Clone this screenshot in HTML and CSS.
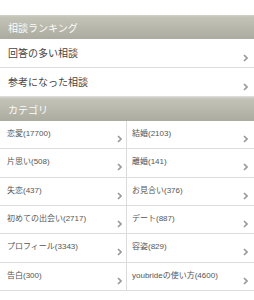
FILE: index.html
```html
<!DOCTYPE html>
<html lang="ja">
<head>
<meta charset="utf-8">
<link rel="stylesheet" href="styles.css">
</head>
<body>
<div class="page">
  <section class="sec">
    <h2 class="sec-head">相談ランキング</h2>
    <ul class="list">
      <li class="item"><span class="label">回答の多い相談</span><svg class="chev" width="5" height="8" viewBox="0 0 5 8"><path d="M1 1 L4 4 L1 7" fill="none" stroke="#9a9a9a" stroke-width="1.7"/></svg></li>
      <li class="item"><span class="label">参考になった相談</span><svg class="chev" width="5" height="8" viewBox="0 0 5 8"><path d="M1 1 L4 4 L1 7" fill="none" stroke="#9a9a9a" stroke-width="1.7"/></svg></li>
    </ul>
  </section>
  <section class="sec">
    <h2 class="sec-head">カテゴリ</h2>
    <ul class="grid">
      <li class="cell"><span class="clabel">恋愛(17700)</span><svg class="chev" width="5" height="8" viewBox="0 0 5 8"><path d="M1 1 L4 4 L1 7" fill="none" stroke="#9a9a9a" stroke-width="1.7"/></svg></li>
      <li class="cell"><span class="clabel">結婚(2103)</span><svg class="chev" width="5" height="8" viewBox="0 0 5 8"><path d="M1 1 L4 4 L1 7" fill="none" stroke="#9a9a9a" stroke-width="1.7"/></svg></li>
      <li class="cell"><span class="clabel">片思い(508)</span><svg class="chev" width="5" height="8" viewBox="0 0 5 8"><path d="M1 1 L4 4 L1 7" fill="none" stroke="#9a9a9a" stroke-width="1.7"/></svg></li>
      <li class="cell"><span class="clabel">離婚(141)</span><svg class="chev" width="5" height="8" viewBox="0 0 5 8"><path d="M1 1 L4 4 L1 7" fill="none" stroke="#9a9a9a" stroke-width="1.7"/></svg></li>
      <li class="cell"><span class="clabel">失恋(437)</span><svg class="chev" width="5" height="8" viewBox="0 0 5 8"><path d="M1 1 L4 4 L1 7" fill="none" stroke="#9a9a9a" stroke-width="1.7"/></svg></li>
      <li class="cell"><span class="clabel">お見合い(376)</span><svg class="chev" width="5" height="8" viewBox="0 0 5 8"><path d="M1 1 L4 4 L1 7" fill="none" stroke="#9a9a9a" stroke-width="1.7"/></svg></li>
      <li class="cell"><span class="clabel">初めての出会い(2717)</span><svg class="chev" width="5" height="8" viewBox="0 0 5 8"><path d="M1 1 L4 4 L1 7" fill="none" stroke="#9a9a9a" stroke-width="1.7"/></svg></li>
      <li class="cell"><span class="clabel">デート(887)</span><svg class="chev" width="5" height="8" viewBox="0 0 5 8"><path d="M1 1 L4 4 L1 7" fill="none" stroke="#9a9a9a" stroke-width="1.7"/></svg></li>
      <li class="cell"><span class="clabel">プロフィール(3343)</span><svg class="chev" width="5" height="8" viewBox="0 0 5 8"><path d="M1 1 L4 4 L1 7" fill="none" stroke="#9a9a9a" stroke-width="1.7"/></svg></li>
      <li class="cell"><span class="clabel">容姿(829)</span><svg class="chev" width="5" height="8" viewBox="0 0 5 8"><path d="M1 1 L4 4 L1 7" fill="none" stroke="#9a9a9a" stroke-width="1.7"/></svg></li>
      <li class="cell"><span class="clabel">告白(300)</span><svg class="chev" width="5" height="8" viewBox="0 0 5 8"><path d="M1 1 L4 4 L1 7" fill="none" stroke="#9a9a9a" stroke-width="1.7"/></svg></li>
      <li class="cell"><span class="clabel">youbrideの使い方(4600)</span><svg class="chev" width="5" height="8" viewBox="0 0 5 8"><path d="M1 1 L4 4 L1 7" fill="none" stroke="#9a9a9a" stroke-width="1.7"/></svg></li>
    </ul>
  </section>
</div>
</body>
</html>
```

FILE: styles.css
```css
html, body {
  margin: 0;
  padding: 0;
  background: #ffffff;
}
body {
  font-family: "Liberation Sans", "Noto Sans CJK JP", sans-serif;
  color: #333333;
}
.page {
  padding-top: 15px;
}
.sec {
  margin: 0;
}
.sec-head {
  margin: 0;
  height: 24px;
  box-sizing: border-box;
  padding-left: 8px;
  display: flex;
  align-items: center;
  font-size: 10px;
  font-weight: normal;
  color: #fbfbf8;
  background: linear-gradient(to bottom, #d4d3cb 0px, #c4c3b8 2px, #acab9f 100%);
}
.list, .grid {
  list-style: none;
  margin: 0;
  padding: 0;
}
.item {
  height: 29px;
  box-sizing: border-box;
  border-bottom: 1px solid #dcdcdc;
  display: flex;
  justify-content: space-between;
  align-items: center;
  padding: 0 6px 0 8px;
  font-size: 10px;
  color: #444444;
}
.item .label {
  margin-top: -1px;
}
.item .chev {
  margin-top: 10px;
}
.grid {
  display: grid;
  grid-template-columns: 127px 1fr;
}
.cell {
  height: 28.33px;
  box-sizing: border-box;
  border-bottom: 1px solid #dcdcdc;
  display: flex;
  justify-content: space-between;
  align-items: center;
  padding: 0 6px 0 5px;
  font-size: 8px;
  color: #555555;
}
.cell:nth-child(odd) {
  border-right: 1px solid #dcdcdc;
  padding: 0 4px 0 7px;
}
.cell .clabel {
  margin-top: -4px;
}
.cell .chev {
  margin-top: 9px;
}
```
